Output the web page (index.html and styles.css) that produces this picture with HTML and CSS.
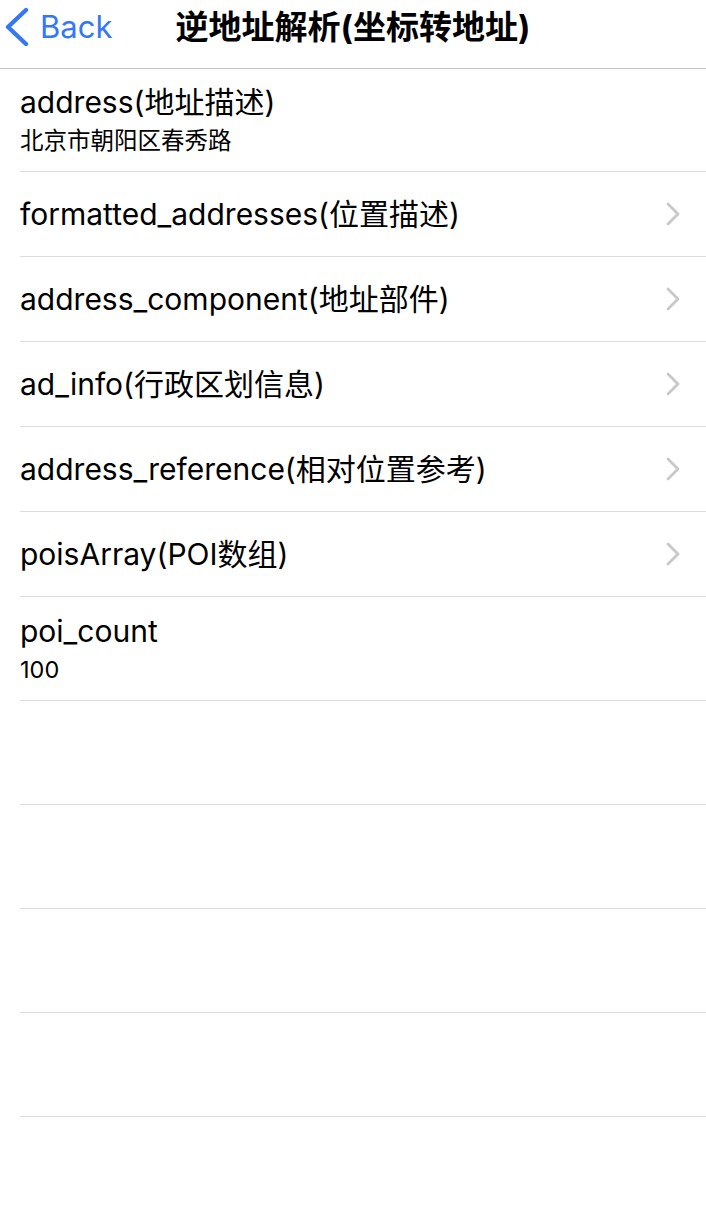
FILE: index.html
```html
<!DOCTYPE html>
<html lang="zh-CN">
<head>
<meta charset="utf-8">
<title>逆地址解析(坐标转地址)</title>
<link rel="stylesheet" href="styles.css">
</head>
<body>
<div class="screen">
  <header class="nav">
    <a class="nav-back" href="#">
      <svg class="nav-back-icon" width="30" height="40" viewBox="0 0 30 40" aria-hidden="true">
        <path d="M26 3 L8 20 L26 37" fill="none" stroke="#3478f6" stroke-width="4.4" stroke-linecap="round" stroke-linejoin="round"/>
      </svg>
      <span class="nav-back-label">Back</span>
    </a>
    <h1 class="nav-title">逆地址解析(坐标转地址)</h1>
    <div class="nav-spacer"></div>
  </header>
  <ul class="list">
    <li class="row row-sub">
      <div class="row-text">
        <div class="row-title">address(地址描述)</div>
        <div class="row-detail">北京市朝阳区春秀路</div>
      </div>
    </li>
    <li class="row row-link">
      <div class="row-title">formatted_addresses(位置描述)</div>
      <svg class="chevron" width="14" height="24" viewBox="0 0 14 24" aria-hidden="true"><path d="M2 2 L12 12 L2 22" fill="none" stroke="#c7c7cc" stroke-width="2.8" stroke-linecap="round" stroke-linejoin="round"/></svg>
    </li>
    <li class="row row-link">
      <div class="row-title">address_component(地址部件)</div>
      <svg class="chevron" width="14" height="24" viewBox="0 0 14 24" aria-hidden="true"><path d="M2 2 L12 12 L2 22" fill="none" stroke="#c7c7cc" stroke-width="2.8" stroke-linecap="round" stroke-linejoin="round"/></svg>
    </li>
    <li class="row row-link">
      <div class="row-title">ad_info(行政区划信息)</div>
      <svg class="chevron" width="14" height="24" viewBox="0 0 14 24" aria-hidden="true"><path d="M2 2 L12 12 L2 22" fill="none" stroke="#c7c7cc" stroke-width="2.8" stroke-linecap="round" stroke-linejoin="round"/></svg>
    </li>
    <li class="row row-link">
      <div class="row-title">address_reference(相对位置参考)</div>
      <svg class="chevron" width="14" height="24" viewBox="0 0 14 24" aria-hidden="true"><path d="M2 2 L12 12 L2 22" fill="none" stroke="#c7c7cc" stroke-width="2.8" stroke-linecap="round" stroke-linejoin="round"/></svg>
    </li>
    <li class="row row-link">
      <div class="row-title">poisArray(POI数组)</div>
      <svg class="chevron" width="14" height="24" viewBox="0 0 14 24" aria-hidden="true"><path d="M2 2 L12 12 L2 22" fill="none" stroke="#c7c7cc" stroke-width="2.8" stroke-linecap="round" stroke-linejoin="round"/></svg>
    </li>
    <li class="row row-sub row-tall">
      <div class="row-text">
        <div class="row-title">poi_count</div>
        <div class="row-detail">100</div>
      </div>
    </li>
    <li class="row row-empty"></li>
    <li class="row row-empty"></li>
    <li class="row row-empty"></li>
    <li class="row row-empty"></li>
  </ul>
</div>
</body>
</html>
```

FILE: styles.css
```css
* {
  box-sizing: border-box;
}

html, body {
  margin: 0;
  padding: 0;
  background: #ffffff;
}

body {
  font-family: Inter, "Liberation Sans", "Noto Sans CJK SC", sans-serif;
  color: #000000;
  -webkit-font-smoothing: antialiased;
}

.screen {
  width: 706px;
  min-height: 1206px;
  background: #ffffff;
}

.nav {
  height: 69px;
  padding-bottom: 15px;
  display: grid;
  grid-template-columns: 1fr auto 1fr;
  align-items: center;
  border-bottom: 1px solid #c6c6c8;
}

.nav-back {
  display: flex;
  align-items: center;
  gap: 10px;
  text-decoration: none;
  color: #3478f6;
}

.nav-back-icon {
  display: block;
  flex: none;
}

.nav-back-label {
  font-size: 31px;
  line-height: 38px;
}

.nav-title {
  margin: 0;
  font-size: 33px;
  line-height: 40px;
  font-weight: 700;
  white-space: nowrap;
  color: #000000;
}

.nav-spacer {
  height: 1px;
}

.list {
  list-style: none;
  margin: 0;
  padding: 0;
}

.row {
  margin-left: 20px;
  border-bottom: 1px solid #dcdcde;
  display: flex;
  align-items: center;
  justify-content: space-between;
  padding-right: 26px;
}

.row-link {
  height: 85px;
}

.row-sub {
  height: 103px;
}

.row-tall,
.row-empty {
  height: 104px;
}

.row-text {
  display: flex;
  flex-direction: column;
  gap: 6px;
}

.row-title {
  font-size: 30px;
  line-height: 36px;
  white-space: nowrap;
}

.row-detail {
  font-size: 23.5px;
  line-height: 30px;
  white-space: nowrap;
}

.chevron {
  display: block;
  flex: none;
}
```
